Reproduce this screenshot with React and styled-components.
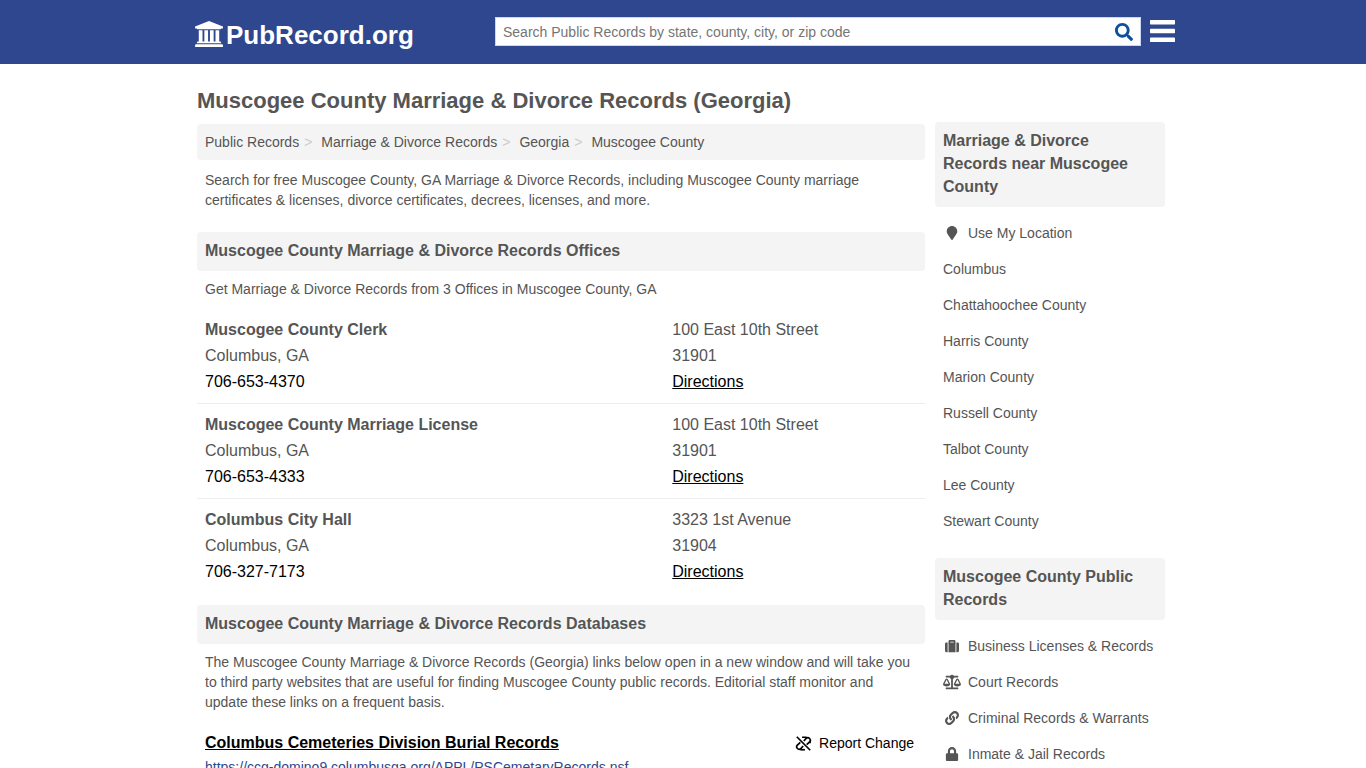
import React, { useState } from 'react';
import styled, { createGlobalStyle } from 'styled-components';
import { FaMapMarker, FaSuitcase, FaBalanceScale, FaLink, FaLock, FaSearch } from 'react-icons/fa';

const GlobalStyle = createGlobalStyle`
    * {
        box-sizing: border-box;
    }
    body {
        margin: 0;
        background: #fff;
        color: #555;
        font-family: "Liberation Sans", Arial, sans-serif;
        font-size: 14px;
        line-height: 20px;
    }
    a {
        color: inherit;
        text-decoration: none;
    }
`

const Header = styled.header`
    background: #2e478f;
    color: #fff;
`
const HeaderInner = styled.div`
    display: flex;
    align-items: center;
    max-width: 984px;
    height: 64px;
    margin: 0 auto;
    padding: 0 0 2px 4px;
`
const Logo = styled.a`
    display: flex;
    align-items: center;
    gap: 3px;
    flex: 0 0 300px;
    padding-top: 8px;
    font-size: 26px;
    line-height: 32px;
    font-weight: bold;
    svg {
        margin-bottom: 2px;
    }
`
const SearchForm = styled.form`
    display: flex;
    flex: 1;
    height: 29px;
    padding-top: 2px;
    background: #fff;
    border: 1px solid #c9d7f0;
`
const SearchInput = styled.input`
    flex: 1;
    min-width: 0;
    padding: 0 7px;
    border: 0;
    outline: 0;
    background: transparent;
    font: inherit;
    color: #555;
    &::placeholder {
        color: #757575;
    }
`
const SearchBtn = styled.button`
    display: flex;
    align-items: center;
    padding: 0 7px;
    border: 0;
    background: transparent;
    color: #0d4f9e;
    font-size: 18px;
    cursor: pointer;
`
const MenuBtn = styled.button`
    display: flex;
    padding: 0;
    margin: 0 0 0 9px;
    border: 0;
    background: transparent;
    color: #fff;
    cursor: pointer;
`

const Page = styled.div`
    display: grid;
    grid-template-columns: minmax(0, 1fr) 230px;
    gap: 10px;
    max-width: 980px;
    margin: 0 auto;
    padding: 0 8px 24px 4px;
`
const Main = styled.main`
    padding-top: 24px;
`
const Title = styled.h1`
    margin: 0 0 10px;
    font-size: 22px;
    line-height: 26px;
`
const Breadcrumb = styled.nav`
    padding: 8px;
    border-radius: 4px;
    background: #f4f4f4;
    a + a::before {
        content: ">";
        padding: 0 9px 0 5px;
        color: #ccc;
    }
`
const Text = styled.p`
    margin: 0;
    padding: ${({ $last }) => $last ? '8px 8px 20px' : '10px 8px 22px'};
`
const SectionTitle = styled.h2`
    margin: 0;
    padding: 7px 8px 9px;
    border-radius: 4px;
    background: #f4f4f4;
    font-size: 16px;
    line-height: 23px;
`
const OfficeIntro = styled.p`
    margin: 0;
    padding: 8px 8px 10px;
`
const OfficeList = styled.div`
    margin-bottom: 11px;
`
const Office = styled.div`
    display: grid;
    grid-template-columns: 21fr 11fr;
    padding: 8px;
    border-bottom: 1px solid #eee;
    font-size: 16px;
    line-height: 26px;
    &:last-child {
        border-bottom-color: transparent;
    }
`
const Phone = styled.a`
    color: #000;
`
const Directions = styled.a`
    color: #000;
    text-decoration: underline;
`
const Database = styled.div`
    padding: 0 8px;
`
const DatabaseHead = styled.div`
    display: flex;
    justify-content: space-between;
    align-items: center;
    padding-right: 3px;
    line-height: 22px;
    color: #000;
`
const DatabaseLink = styled.a`
    font-size: 16px;
    font-weight: bold;
    text-decoration: underline;
`
const Report = styled.a`
    display: flex;
    align-items: center;
    gap: 7px;
`
const DatabaseUrl = styled.a`
    display: block;
    margin-top: 3px;
    color: #2e478f;
`

const Side = styled.aside`
    padding-top: 58px;
`
const SideList = styled.ul`
    margin: 0 0 19px;
    padding: 8px 0 0;
    list-style: none;
`
const SideLink = styled.a`
    display: flex;
    align-items: center;
    gap: 7px;
    padding: 8px;
    white-space: nowrap;
`
const IconSlot = styled.span`
    display: flex;
    justify-content: center;
    width: 18px;
    font-size: ${({ $wide }) => $wide ? '18px' : '14px'};
`

const crumbs = ['Public Records', 'Marriage & Divorce Records', 'Georgia', 'Muscogee County']

const offices = [
    { name: 'Muscogee County Clerk', city: 'Columbus, GA', phone: '706-653-4370', street: '100 East 10th Street', zip: '31901' },
    { name: 'Muscogee County Marriage License', city: 'Columbus, GA', phone: '706-653-4333', street: '100 East 10th Street', zip: '31901' },
    { name: 'Columbus City Hall', city: 'Columbus, GA', phone: '706-327-7173', street: '3323 1st Avenue', zip: '31904' },
]

const nearby = [
    { label: 'Use My Location', Icon: FaMapMarker },
    { label: 'Columbus' },
    { label: 'Chattahoochee County' },
    { label: 'Harris County' },
    { label: 'Marion County' },
    { label: 'Russell County' },
    { label: 'Talbot County' },
    { label: 'Lee County' },
    { label: 'Stewart County' },
]

const publicRecords = [
    { label: 'Business Licenses & Records', Icon: FaSuitcase },
    { label: 'Court Records', Icon: FaBalanceScale, wide: true },
    { label: 'Criminal Records & Warrants', Icon: FaLink },
    { label: 'Inmate & Jail Records', Icon: FaLock },
]

// courthouse with four columns
const CourthouseIcon = () => (
    <svg width="28" height="26" viewBox="0 0 1920 1792" fill="currentColor" aria-hidden="true">
        <path d="M960 0l960 384v128h-128q0 26-20.5 45t-48.5 19h-1526q-28 0-48.5-19t-20.5-45h-128v-128zM256 640h256v768h128v-768h256v768h128v-768h256v768h128v-768h256v768h59q28 0 48.5 19t20.5 45v64h-1664v-64q0-26 20.5-45t48.5-19h59v-768zM1851 1600q28 0 48.5 19t20.5 45v128h-1920v-128q0-26 20.5-45t48.5-19h1782z" />
    </svg>
)

// chain link crossed by a slash
const BrokenLinkIcon = () => (
    <svg width="17" height="17" viewBox="0 0 24 24" fill="none" stroke="currentColor" strokeWidth="2.4" aria-hidden="true">
        <path d="M12.5 8.5L16 4.5a3.6 3.6 0 0 1 5 5L16.5 13.5" />
        <path d="M10 3.2h6.5M21.2 8v3.5" />
        <path d="M11.5 15.5L8 19.5a3.6 3.6 0 0 1-5-5L7.5 10.5" />
        <path d="M14 20.8H7.5" />
        <path d="M2.5 2.5l19 19" />
    </svg>
)

const SideSection = ({ title, items }) => (
    <section>
        <SectionTitle>{title}</SectionTitle>
        <SideList>
            {items.map(({ label, Icon, wide }) => (
                <li key={label}>
                    <SideLink href="#">
                        {Icon && <IconSlot $wide={wide}><Icon /></IconSlot>}
                        {label}
                    </SideLink>
                </li>
            ))}
        </SideList>
    </section>
)

const App = () => {
    const [query, setQuery] = useState('')

    return (
        <>
            <GlobalStyle />
            <Header>
                <HeaderInner>
                    <Logo href="#"><CourthouseIcon />PubRecord.org</Logo>
                    <SearchForm role="search" onSubmit={(e) => e.preventDefault()}>
                        <SearchInput
                            type="text"
                            aria-label="Search Public Records"
                            placeholder="Search Public Records by state, county, city, or zip code"
                            value={query}
                            onChange={(e) => setQuery(e.target.value)}
                        />
                        <SearchBtn type="submit" aria-label="Search"><FaSearch /></SearchBtn>
                    </SearchForm>
                    <MenuBtn type="button" aria-label="Menu">
                        <svg width="25" height="22" viewBox="0 0 25 22" fill="currentColor">
                            <rect width="25" height="4.4" rx="0.6" />
                            <rect y="8.8" width="25" height="4.4" rx="0.6" />
                            <rect y="17.6" width="25" height="4.4" rx="0.6" />
                        </svg>
                    </MenuBtn>
                </HeaderInner>
            </Header>
            <Page>
                <Main>
                    <Title>Muscogee County Marriage &amp; Divorce Records (Georgia)</Title>
                    <Breadcrumb aria-label="Breadcrumb">
                        {crumbs.map((crumb) => <a href="#" key={crumb}>{crumb}</a>)}
                    </Breadcrumb>
                    <Text>
                        Search for free Muscogee County, GA Marriage &amp; Divorce Records, including Muscogee County
                        marriage certificates &amp; licenses, divorce certificates, decrees, licenses, and more.
                    </Text>
                    <SectionTitle>Muscogee County Marriage &amp; Divorce Records Offices</SectionTitle>
                    <OfficeIntro>Get Marriage &amp; Divorce Records from 3 Offices in Muscogee County, GA</OfficeIntro>
                    <OfficeList>
                        {offices.map((office) => (
                            <Office key={office.name}>
                                <div>
                                    <strong>{office.name}</strong>
                                    <div>{office.city}</div>
                                    <Phone href={`tel:${office.phone}`}>{office.phone}</Phone>
                                </div>
                                <div>
                                    <div>{office.street}</div>
                                    <div>{office.zip}</div>
                                    <Directions href="#">Directions</Directions>
                                </div>
                            </Office>
                        ))}
                    </OfficeList>
                    <SectionTitle>Muscogee County Marriage &amp; Divorce Records Databases</SectionTitle>
                    <Text $last>
                        The Muscogee County Marriage &amp; Divorce Records (Georgia) links below open in a new window
                        and will take you to third party websites that are useful for finding Muscogee County public
                        records. Editorial staff monitor and update these links on a frequent basis.
                    </Text>
                    <Database>
                        <DatabaseHead>
                            <DatabaseLink href="#">Columbus Cemeteries Division Burial Records</DatabaseLink>
                            <Report href="#"><BrokenLinkIcon />Report Change</Report>
                        </DatabaseHead>
                        <DatabaseUrl href="#">https://ccg-domino9.columbusga.org/APPL/PSCemetaryRecords.nsf</DatabaseUrl>
                    </Database>
                </Main>
                <Side>
                    <SideSection title="Marriage & Divorce Records near Muscogee County" items={nearby} />
                    <SideSection title="Muscogee County Public Records" items={publicRecords} />
                </Side>
            </Page>
        </>
    )
}

export default App;
